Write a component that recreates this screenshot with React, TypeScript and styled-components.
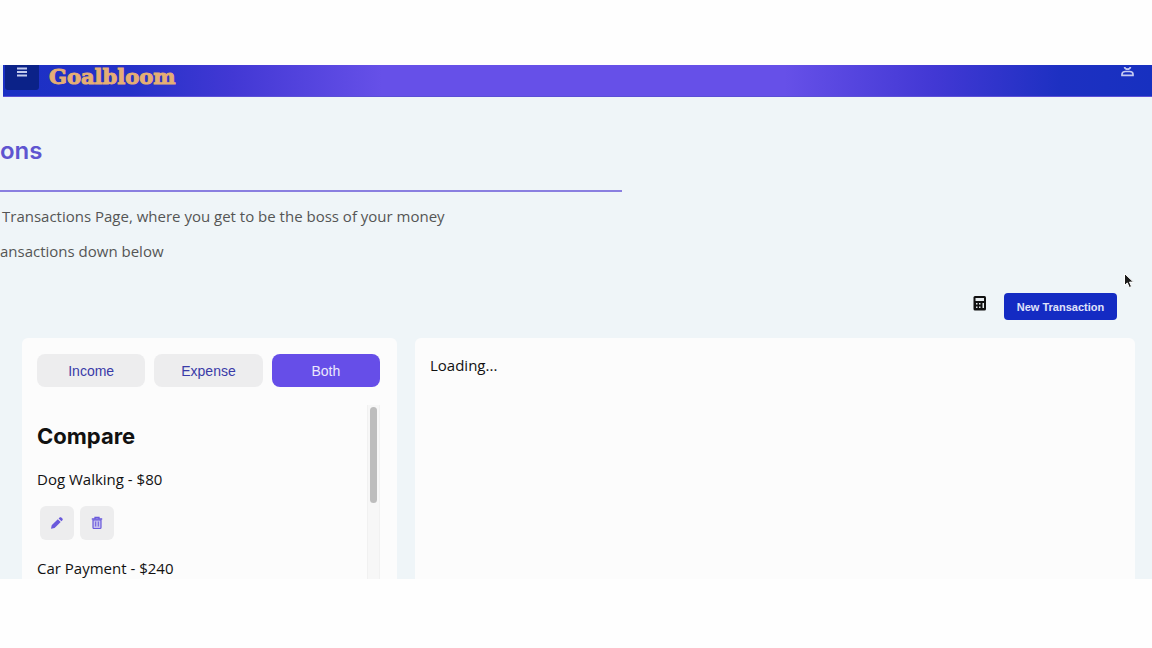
import React from "react";
import styled, { createGlobalStyle, css } from "styled-components";

const GlobalStyle = createGlobalStyle`
  * { box-sizing: border-box; }
  body {
    margin: 0;
    background: #fefefe;
    font-family: "Open Sans", "Liberation Sans", sans-serif;
    color: #111;
  }
  h1, h2, p, ul { margin: 0; padding: 0; }
  h1, h2 { font-family: Inter, "Liberation Sans", sans-serif; }
  button { border: 0; padding: 0; cursor: pointer; font-family: "Liberation Sans", Arial, sans-serif; }
`;

const Page = styled.div`
  display: flex;
  flex-direction: column;
  height: 100vh;
  padding: 65px 0 69px;
`;

const Frame = styled.div`
  flex: 1;
  min-height: 0;
  display: flex;
  flex-direction: column;
  overflow: hidden;
  position: relative;
  background: #eff5f8;
`;

const Header = styled.header`
  flex: none;
  display: flex;
  align-items: flex-start;
  height: 32px;
  margin-left: 3px;
  overflow: hidden;
  background: linear-gradient(90deg, #1a30c4 0%, #2531c8 11%, #4238d4 20%, #6650e8 33%, #6650e8 68%, #4238d4 81%, #1d30c2 92%, #1730c0 100%);
  border-bottom: 1px solid #5a4fd6;
`;

const MenuButton = styled.button`
  display: flex;
  justify-content: center;
  width: 34px;
  height: 25px;
  margin-left: 2px;
  padding-top: 2px;
  border-radius: 0 0 3px 3px;
  background: #0b2288;
`;

const Brand = styled.a`
  margin-left: 10px;
  font: 700 21px/23px "DejaVu Serif", serif;
  color: #e5ae74;
  text-decoration: none;
  -webkit-text-stroke: 1px #e5ae74;
`;

const ProfileButton = styled.button`
  height: 12px;
  margin: 0 17px 0 auto;
  background: none;
  overflow: hidden;
`;

const Intro = styled.section`
  flex: none;
  padding-top: 36px;
`;

const Title = styled.h1`
  width: 54%;
  padding-bottom: 21px;
  border-bottom: 2px solid #8a7fe0;
  font-size: 24px;
  line-height: 36px;
  font-weight: 600;
  color: #5f55d0;
`;

const Lead = styled.p<{ $inset?: boolean }>`
  margin-top: 13px;
  padding-left: ${(p) => (p.$inset ? 2 : 0)}px;
  font-size: 15px;
  line-height: 22px;
  color: #555;
`;

const Actions = styled.div`
  flex: none;
  display: flex;
  justify-content: flex-end;
  gap: 17px;
  margin-top: 31px;
  padding-right: 35px;
`;

const CalculatorButton = styled.button`
  display: flex;
  height: 20px;
  background: none;
`;

const NewButton = styled.button`
  width: 113px;
  height: 27px;
  border-radius: 4px;
  background: #142bc3;
  color: #e0e3fa;
  font-size: 11px;
  font-weight: 700;
`;

const Panels = styled.main`
  flex: 1;
  min-height: 0;
  display: grid;
  grid-template-columns: 375px 1fr;
  gap: 18px;
  margin-top: 18px;
  padding: 0 17px 0 22px;
`;

const Panel = styled.section`
  display: flex;
  flex-direction: column;
  min-height: 0;
  padding: 16px 17px 0 15px;
  border-radius: 6px 6px 0 0;
  background: #fcfcfc;
`;

const Tabs = styled.div`
  display: grid;
  grid-template-columns: repeat(3, 1fr);
  gap: 9px;
`;

const Tab = styled.button<{ $active?: boolean }>`
  height: 33px;
  border-radius: 8px;
  font-size: 14px;
  background: #ededee;
  color: #3a3ba8;
  ${(p) => p.$active && css`
    background: #664ee8;
    color: #ebe8fc;
  `}
`;

const ListArea = styled.div`
  flex: 1;
  min-height: 0;
  display: flex;
  justify-content: space-between;
  margin-top: 18px;
  overflow: hidden;
`;

const ListHeading = styled.h2`
  margin-top: 16px;
  font-size: 22px;
  line-height: 30px;
  font-weight: 700;
`;

const Transactions = styled.ul`
  list-style: none;
`;

const Transaction = styled.li`
  padding-top: 17px;
`;

const BodyText = styled.p`
  font-size: 15px;
  line-height: 22px;
`;

const RowActions = styled.div`
  display: flex;
  gap: 6px;
  margin: 16px 0 0 3px;
`;

const IconButton = styled.button`
  display: grid;
  place-items: center;
  width: 34px;
  height: 34px;
  border-radius: 6px;
  background: #ededee;
  color: #6a59dc;
`;

const Track = styled.div`
  width: 13px;
  padding: 2px;
  background: #f7f7f7;
  border: solid #f1f1f1;
  border-width: 0 1px;
`;

const Thumb = styled.div`
  height: 96px;
  border-radius: 4px;
  background: #bdbdbd;
`;

const Pointer = styled.svg`
  position: absolute;
  top: 207px;
  right: 17px;
`;

const PencilIcon = () => (
  <svg width="14" height="14" viewBox="0 0 14 14" fill="currentColor" aria-hidden="true">
    <path d="M1 12.700l.7-3.500 6.100-6 2.900 2.800-6.100 6zM8.600 2.500l1-1c.5-.5 1.200-.5 1.700 0l1.100 1.100c.5.5.5 1.200 0 1.700l-1 1z" />
  </svg>
);

const TrashIcon = () => (
  <svg width="12" height="14" viewBox="0 0 12 14" fill="none" stroke="currentColor" aria-hidden="true">
    <path d="M2 4h8v7.500a1 1 0 0 1-1 1H3a1 1 0 0 1-1-1z" fill="#c6c0ee" strokeWidth="1.200" />
    <path d="M.8 3h10.400M4 2.700V1.300h4v1.400" strokeWidth="1.300" />
    <path d="M4.700 5.500v5M7.300 5.500v5" strokeWidth="1" />
  </svg>
);

const transactions = [
  { name: "Dog Walking", amount: 80 },
  { name: "Car Payment", amount: 240 },
];

export default function App() {
  return (
    <>
      <GlobalStyle />
      <Page>
        <Frame>
          <Header>
            <MenuButton aria-label="Open menu">
              <svg width="11" height="10" viewBox="0 0 11 10" stroke="#c3cbed" strokeWidth="2" aria-hidden="true">
                <path d="M0 1.500h10M0 5h10M0 8.500h10" />
              </svg>
            </MenuButton>
            <Brand href="#">Goalbloom</Brand>
            <ProfileButton aria-label="Profile">
              <svg width="15" height="10" viewBox="0 0 15 10" fill="none" stroke="#c5caf2" strokeWidth="1.700" aria-hidden="true">
                <path d="M4.500 0c.4 1.500 1.600 2.200 3 2.200s2.600-.7 3-2.200" />
                <path d="M2 8.300V7.200c0-1.800 1.600-2.700 3.400-2.700h4.200c1.800 0 3.400.9 3.400 2.700v1.100z" />
              </svg>
            </ProfileButton>
          </Header>
          <Intro>
            <Title>ons</Title>
            <Lead $inset>Transactions Page, where you get to be the boss of your money</Lead>
            <Lead>ansactions down below</Lead>
          </Intro>
          <Actions>
            <CalculatorButton aria-label="Calculator">
              <svg width="14" height="20" viewBox="0 0 14 20" aria-hidden="true">
                <rect x="0.500" y="3" width="12.500" height="14.500" rx="1.500" fill="#111" />
                <path d="M2.500 5h8.500v3H2.500zM3 10h1.500v1.500H3zM6 10h1.500v1.500H6zM3 13.500h1.500V15H3zM6 13.500h1.500V15H6zM9.500 10H11v5H9.500z" fill="#e6ebee" />
              </svg>
            </CalculatorButton>
            <NewButton>New Transaction</NewButton>
          </Actions>
          <Panels>
            <Panel>
              <Tabs>
                <Tab>Income</Tab>
                <Tab>Expense</Tab>
                <Tab $active>Both</Tab>
              </Tabs>
              <ListArea>
                <div>
                  <ListHeading>Compare</ListHeading>
                  <Transactions>
                    {transactions.map((t) => (
                      <Transaction key={t.name}>
                        <BodyText>{t.name} - ${t.amount}</BodyText>
                        <RowActions>
                          <IconButton aria-label={`Edit ${t.name}`}><PencilIcon /></IconButton>
                          <IconButton aria-label={`Delete ${t.name}`}><TrashIcon /></IconButton>
                        </RowActions>
                      </Transaction>
                    ))}
                  </Transactions>
                </div>
                <Track><Thumb /></Track>
              </ListArea>
            </Panel>
            <Panel>
              <BodyText>Loading...</BodyText>
            </Panel>
          </Panels>
          <Pointer width="12" height="18" viewBox="0 0 12 18" aria-hidden="true">
            <path d="M1.500 1.500v12l2.800-2.600 2 4.600 2.200-1-2-4.400h4z" fill="#1c1c1c" stroke="#fff" strokeWidth="1" />
          </Pointer>
        </Frame>
      </Page>
    </>
  );
}
